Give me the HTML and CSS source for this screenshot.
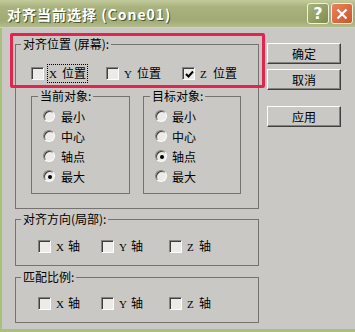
FILE: index.html
```html
<!DOCTYPE html>
<html lang="zh-CN">
<head>
    <meta charset="UTF-8">
    <title>对齐当前选择</title>
    <link rel="stylesheet" href="styles.css">
</head>
<body>
    <div class="window">
        <div class="titlebar">
            <span class="title">对齐当前选择 (Cone01)</span>
            <div class="title-buttons">
                <span class="tbtn help">?</span>
                <span class="tbtn close">
                    <svg width="12" height="12" viewBox="0 0 12 12"><path d="M1.5 1.5 L10.5 10.5 M10.5 1.5 L1.5 10.5" stroke="#fff" stroke-width="2.2"/></svg>
                </span>
            </div>
        </div>
        <div class="frame">
            <div class="left">
                <fieldset class="group main-group">
                    <legend>对齐位置 (屏幕):</legend>
                    <div class="main-body">
                        <div class="check-row pos-row">
                            <label class="check"><span class="box"></span><span class="text focus"><span class="axis">X</span>位置</span></label>
                            <label class="check"><span class="box"></span><span class="text"><span class="axis">Y</span>位置</span></label>
                            <label class="check"><span class="box checked"><svg width="9" height="9" viewBox="0 0 9 9"><path d="M1 4 L3.5 6.5 L8 1.5" fill="none" stroke="#000" stroke-width="2"/></svg></span><span class="text"><span class="axis">Z</span>位置</span></label>
                        </div>
                        <div class="sub-row">
                            <fieldset class="group sub-group current">
                                <legend>当前对象:</legend>
                                <div class="radio-list">
                                    <div class="radio"><span class="ring"></span>最小</div>
                                    <div class="radio"><span class="ring"></span>中心</div>
                                    <div class="radio"><span class="ring"></span>轴点</div>
                                    <div class="radio"><span class="ring on"></span>最大</div>
                                </div>
                            </fieldset>
                            <fieldset class="group sub-group target">
                                <legend>目标对象:</legend>
                                <div class="radio-list">
                                    <div class="radio"><span class="ring"></span>最小</div>
                                    <div class="radio"><span class="ring"></span>中心</div>
                                    <div class="radio"><span class="ring on"></span>轴点</div>
                                    <div class="radio"><span class="ring"></span>最大</div>
                                </div>
                            </fieldset>
                        </div>
                    </div>
                </fieldset>

                <fieldset class="group axis-group first">
                    <legend>对齐方向(局部):</legend>
                    <div class="check-row axis-row">
                        <label class="check"><span class="box"></span><span class="text"><span class="axis">X</span>轴</span></label>
                        <label class="check"><span class="box"></span><span class="text"><span class="axis">Y</span>轴</span></label>
                        <label class="check"><span class="box"></span><span class="text"><span class="axis">Z</span>轴</span></label>
                    </div>
                </fieldset>

                <fieldset class="group axis-group second">
                    <legend>匹配比例:</legend>
                    <div class="check-row axis-row">
                        <label class="check"><span class="box"></span><span class="text"><span class="axis">X</span>轴</span></label>
                        <label class="check"><span class="box"></span><span class="text"><span class="axis">Y</span>轴</span></label>
                        <label class="check"><span class="box"></span><span class="text"><span class="axis">Z</span>轴</span></label>
                    </div>
                </fieldset>
            </div>

            <div class="buttons">
                <button class="btn ok">确定</button>
                <button class="btn cancel">取消</button>
                <button class="btn apply">应用</button>
            </div>

            <div class="highlight"></div>
        </div>
    </div>
</body>
</html>
```

FILE: styles.css
```css
html, body {
    margin: 0;
    padding: 0;
}
body {
    font-family: "Noto Sans CJK SC", "Liberation Sans", sans-serif;
    font-size: 12px;
    color: #000;
    background: #c9c8c4;
}
.window {
    width: 355px;
    height: 332px;
    display: flex;
    flex-direction: column;
    overflow: hidden;
}
.titlebar {
    height: 28px;
    flex: none;
    display: flex;
    align-items: center;
    justify-content: space-between;
    background: linear-gradient(#c3cb9c, #aab37f 25%, #a1aa74 75%, #b4bc8c);
    border-bottom: 1px solid #cdd3b0;
    box-sizing: border-box;
}
.title {
    margin-left: 7px;
    font-size: 14px;
    font-weight: bold;
    letter-spacing: 1px;
    color: #fff;
    text-shadow: 1px 1px 0 #4d5530;
    line-height: 16px;
}
.title-buttons {
    display: flex;
    gap: 2px;
    margin-right: 2px;
}
.tbtn {
    width: 22px;
    height: 21px;
    box-sizing: border-box;
    border: 1px solid #eef0e0;
    border-radius: 3px;
    display: flex;
    align-items: center;
    justify-content: center;
    color: #fff;
    font-family: "DejaVu Sans", sans-serif;
    font-weight: bold;
    font-size: 16px;
}
.help {
    background: linear-gradient(135deg, #a8b47c, #7f8c50);
}
.close {
    background: linear-gradient(135deg, #e8845c, #c9552f);
}
.frame {
    flex: 1;
    position: relative;
    display: flex;
    align-items: flex-start;
    border-left: 2px solid #a9c07a;
    border-bottom: 3px solid #a9c07a;
    padding: 9px 0 0 13px;
}
.left {
    width: 244px;
    flex: none;
}
.group {
    margin: 0;
    padding: 0;
    min-width: 0;
    border: 1px solid #74736f;
    box-sizing: border-box;
}
.group legend {
    padding: 0 2px;
    margin-left: 5px;
    line-height: 14px;
}
.main-group {
    width: 244px;
}
.main-body {
    padding: 14px 0 14px 15px;
}
.check-row {
    display: grid;
    height: 16px;
    align-items: center;
}
.pos-row {
    grid-template-columns: 75px 76px auto;
}
.axis-row {
    grid-template-columns: 63px 68px auto;
}
.check {
    display: flex;
    align-items: center;
}
.box {
    width: 13px;
    height: 13px;
    box-sizing: border-box;
    border: 1px solid;
    border-color: #84837f #fdfdfb #fdfdfb #84837f;
    box-shadow: inset 1px 1px 0 #3f3f3d;
    background: #ecebe7;
    margin-right: 4px;
    display: flex;
    align-items: center;
    justify-content: center;
    padding: 1px 0 0 1px;
}
.text {
    padding: 0 1px;
    line-height: 14px;
    white-space: nowrap;
}
.axis {
    display: inline-block;
    width: 12px;
    font-family: "Liberation Serif", serif;
    font-size: 11px;
}
.pos-row .axis {
    width: 13px;
}
.focus {
    outline: 1px dotted #000;
    outline-offset: 0;
    padding: 1px 1px;
}
.sub-row {
    display: flex;
    gap: 13px;
    margin-top: 8px;
}
.current {
    width: 99px;
}
.target {
    width: 98px;
}
.sub-group legend {
    margin-left: 6px;
}
.radio-list {
    padding: 3px 0 7px 11px;
}
.radio {
    height: 20px;
    display: flex;
    align-items: center;
}
.ring {
    width: 12px;
    height: 12px;
    box-sizing: border-box;
    border-radius: 50%;
    border: 1px solid;
    border-color: #84837f #fdfdfb #fdfdfb #84837f;
    box-shadow: inset 1px 1px 0 #3f3f3d;
    background: #ecebe7;
    margin-right: 6px;
    display: flex;
    align-items: center;
    justify-content: center;
}
.ring.on::after {
    content: "";
    width: 4px;
    height: 4px;
    border-radius: 50%;
    background: #000;
    margin: 1px 0 0 1px;
}
.target .ring {
    margin-right: 5px;
}
.axis-group {
    width: 244px;
}
.axis-group.first {
    margin-top: 3px;
}
.axis-group.second {
    margin-top: 4px;
}
.axis-group .check-row {
    margin-left: 22px;
}
.first .check-row {
    margin-top: 12px;
    margin-bottom: 11px;
}
.second .check-row {
    margin-top: 11px;
    margin-bottom: 11px;
}
.buttons {
    display: flex;
    flex-direction: column;
    margin-left: 8px;
    margin-top: 6px;
}
.btn {
    width: 74px;
    height: 21px;
    padding: 0;
    font-family: inherit;
    font-size: 12px;
    color: #000;
    background: #c9c8c4;
    border: 1px solid;
    border-color: #fdfdfb #3f3f3d #3f3f3d #fdfdfb;
    box-shadow: inset -1px -1px 0 #84837f;
}
.cancel {
    margin-top: 5px;
}
.apply {
    margin-top: 16px;
}
.highlight {
    position: absolute;
    left: 8px;
    top: 5px;
    width: 255px;
    height: 55px;
    box-sizing: border-box;
    border: 3px solid #e5234f;
    border-radius: 2px;
}
```
